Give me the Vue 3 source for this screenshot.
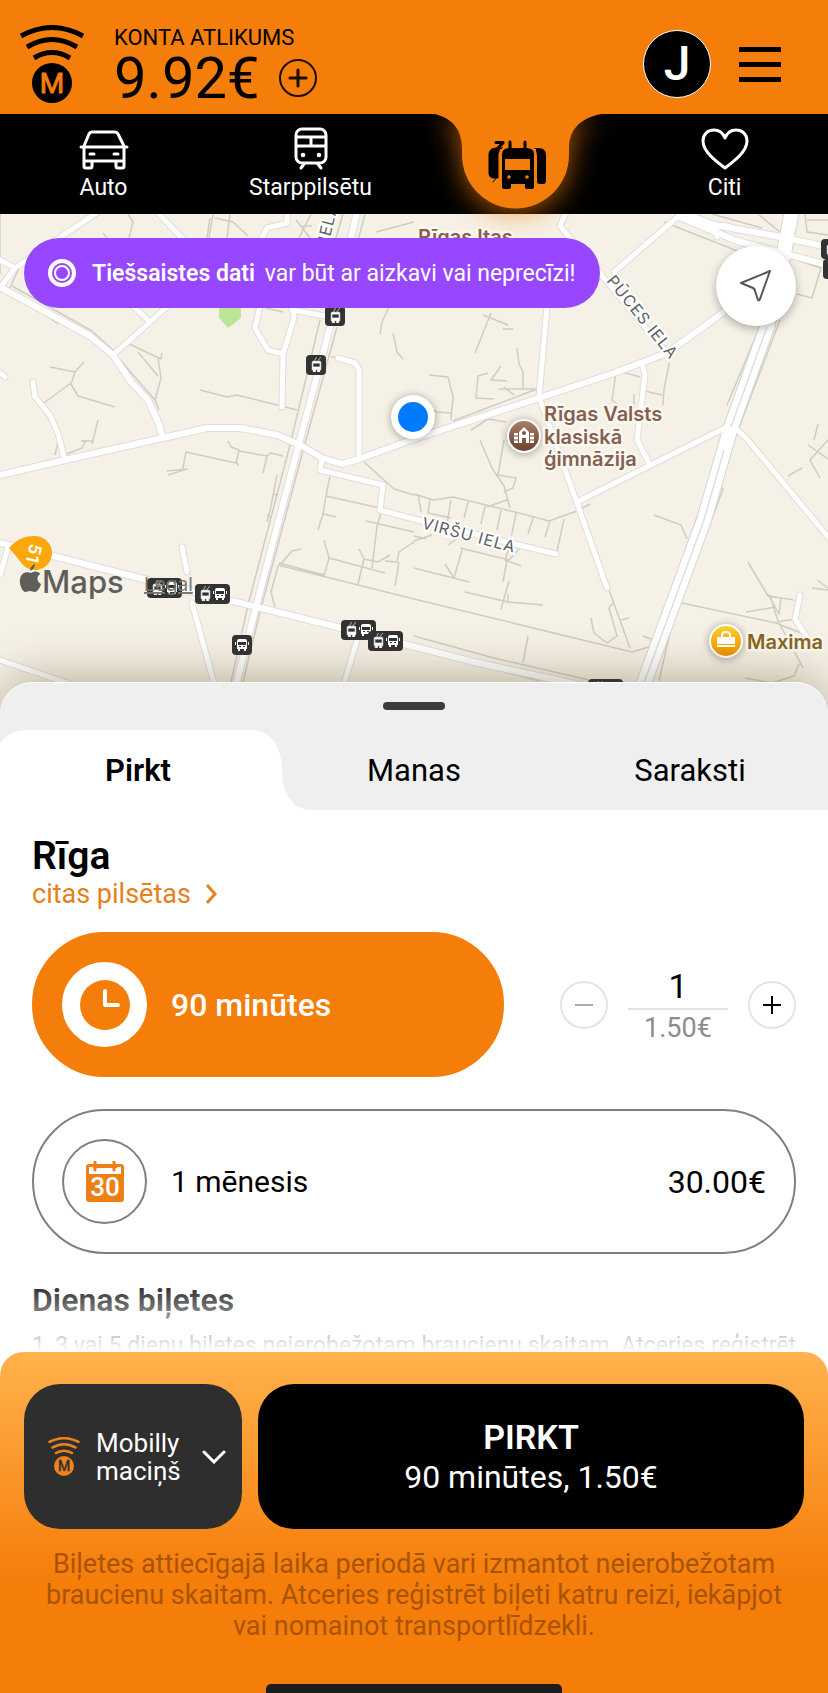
<script setup>
import { computed, ref } from 'vue'

const navItems = [
  { id: 'auto', label: 'Auto' },
  { id: 'train', label: 'Starppilsētu' },
  { id: 'city', label: 'Sabiedriskais transports', active: true },
  { id: 'other', label: 'Citi' },
]

const tabs = ['Pirkt', 'Manas', 'Saraksti']
const activeTab = ref('Pirkt')

const count = ref(1)
const total = computed(() => (count.value * 1.5).toFixed(2) + '€')

// Footpaths and service lanes
const lanes = [
  'M128 214l5 8-4 16M103 233l5 6M213 214l-4 24M210 218l-3 20M215 218l18 4 15 14M230 214l-3 24M296 220l14 18M299 238l12-24M302 226h10M0 214v60M9 290l10-22M376 232l38-10',
  'M0 282l58 42M12 286l80 45 22 20M113 352l42 48 4 10M129 344l32 15 1-6M138 352l20 24M155 400l6-22-3-20M50 367l25 5 9-10M75 372l-4 12 7 12 37 11M44 403l27-20M98 420l-6 24M81 441h13M55 455l4-18M64 455l18-7 4-8',
  'M200 390l27 7 10-2 60 15M331 357h7M389 307l-7 15-2 12M393 333l4 19 6 7M266 308l17 4M343 214l-14 48M365 214l-18 68M320 320l-30 125-42 160-17 77M337 327l-33 120-44 165-17 70',
  'M168 475l19-6-20 2M183 468l3-16 50 11 3-13-8-3-3-6M237 462l1 4M239 451l28 5 4-3 12 3M267 456l-4 17M277 475l-7 36-3 11M273 494l5 1M267 515l4 2',
  'M330 476l-4 20 54 12M326 496l-3 18-5 16M323 514l13 3M366 521l48 11M381 513l-4 13-5 42M324 540l5 18-5 18M279 566l13-15 9-2M279 563l45 12M329 558l56 15M359 549l5 10 14 3 12-7M364 559l-6 25M385 561l12 1 2-10 15-10M399 562l-4 24M278 565l136 34M278 566l-7 26 4 15',
  'M364 462l30 27 20 6M414 494l20 6 19-3 62 15 34 9 28-10 13-7M418 494l3 18M430 499l-2 14 23 5M451 500l-4 24M468 502l-4 16M485 506l-4 18M501 510l-4 20M516 513l-7 35-4 12 16 6M533 518l-5 16M550 521l-5 16M564 519l-7 32M414 536l12 3M414 541l18-6M448 545l11-8M460 548l49 12 13-14M462 550l-8 28-9-14M507 560l-4 22M414 568l55 14M465 592l43 10 35 3M509 581l-8 28M508 594v8',
  'M480 440l12 28 12 18 6 22M504 440l-6 35 18 3-3 10-9 4M487 507l20-7M414 599l218 53 20-6M528 636l-5 27M591 618l3 15 13 10 10-7-8-28 4-5M609 590l21 58M621 620l8-2M643 636l8 3 2 14M414 645l55 18M440 655l100 26M414 636l80 22 95 22',
  'M491 313l-16 40M483 315l25 10M503 329h10M517 348l2 16 4 8v16M488 373l-10 3-2 22 18 1M501 366l-10 14 16 1M499 389l38 0-84 32M504 387l10 8M429 375l19 2 5 20-2 23M411 400l26 12 14 1M471 430l17-11 18 3M616 372l-4 28 8 6M619 371l21 6M671 355l-7 34-1 16M644 391l18 4M634 394v14M566 465l10 43',
  'M664 222l114 45M712 214l50 14M758 214l22 18M805 214l2 18 21 3M807 220h21M796 260l25 8-9 30-15-4M727 405l62-148M780 320l-63 165 6 4-30 80-20 50-14 62M717 460l-75 215M654 515l27 10 6 14M682 603l94 20 30 12M748 562l20 34 26 4M768 594l11 20 2-16M776 607l-30 5M777 622l18-3M779 623l24 45M770 595l8 26M745 678l27 5 22-7 5-12M808 445l20 14M828 440l-18 20 10 18M802 468l-14 8M817 580l11 8M812 588l16 2M818 424l-4 16',
]

// Narrow streets
const streets = [
  'M0 260l15 8 23-16 60-40M15 268L0 288M157 212l28 29M113 355l37-33 20-18M133 306l17 16M0 373l5 4',
  'M33 382l2 15 15 18 8 18 7 28M287 214v9l-20 5-6 12M260 306l-5 22 13 22 15 4M293 306l1 12-11 36-1 53M292 310l33 6',
  'M338 358l17 5 4 7v89M322 460l-2 10 63 15-3 25 34 9 80 20 62 15',
  'M566 212l-6 14 107 127M614 272l67-58M547 306l-8 91 38 106 30 85M642 363l3 12-8 65 12 23M577 502l154-77M734 427l13 12 81 98M717 237c-5-14 8-12 14-10M800 595l-5 24 12 18',
  'M182 547l5 25M192 603l22 80M0 660l70 24M357 640l-13 44M8 547l-8 28',
]

// Collector roads
const roads = [
  'M-2 286l59 32 33 18 23 19 18 27 17 18 10 22 5 16',
  'M0 475l65-15 142-32h33l37 7 23 10 22 13 20 6 17-5 55-20 125-41 75-25 53-20 50-36 25-20',
  'M357 212l-27 115-32 120-41 156-21 82',
  'M0 543l57 14 138 35 62 15 100 25 117 30 110 24',
  'M677 216l60 25 91 24M681 212l33 13 67 12 47 10',
]

const stops = [
  { x: 325, y: 306, kind: 'trolley' },
  { x: 306, y: 355, kind: 'trolley' },
  { x: 147, y: 578, kind: 'both' },
  { x: 195, y: 584, kind: 'both' },
  { x: 232, y: 635, kind: 'bus' },
  { x: 341, y: 620, kind: 'both' },
  { x: 368, y: 631, kind: 'both' },
  { x: 588, y: 679, kind: 'both' },
  { x: 821, y: 239, kind: 'both' },
  { x: 823, y: 259, kind: 'both' },
]
</script>

<template>
  <div class="app">
    <header class="top">
      <svg class="logo" viewBox="0 0 64 78" role="img" aria-label="Mobilly">
        <g fill="none" stroke="#000" stroke-width="5">
          <path d="M1 11Q32 -6 63 11" />
          <path d="M7 22Q32 7 57 22" />
          <path d="M14 33Q32 22 50 33" />
        </g>
        <circle cx="32" cy="58" r="20" />
        <text class="logo-m logo-m-top" x="32" y="68" text-anchor="middle">M</text>
      </svg>
      <div class="balance">
        <span class="balance-label">KONTA ATLIKUMS</span>
        <div class="balance-row">
          <strong class="balance-value">9.92€</strong>
          <button class="plain add" aria-label="Papildināt kontu">
            <svg viewBox="0 0 40 40" width="40" height="40" fill="none" stroke="#1a0d00">
              <circle cx="20" cy="20" r="18" stroke-width="2" />
              <path d="M20 12v16M12 20h16" stroke-width="3" stroke-linecap="round" />
            </svg>
          </button>
        </div>
      </div>
      <button class="plain avatar">J</button>
      <button class="plain burger" aria-label="Izvēlne"><i></i><i></i><i></i></button>
    </header>

    <nav class="nav">
      <button
        v-for="item in navItems"
        :key="item.id"
        class="plain nav-item"
        :class="{ active: item.active }"
        :aria-label="item.label"
      >
        <svg v-if="item.id === 'auto'" viewBox="0 0 50 40" width="50" height="40" fill="none" stroke="#fff" stroke-width="3" stroke-linecap="round" stroke-linejoin="round">
          <path d="M5 16L10 4q1-2 3-2h23q2 0 3 2l6 12M2 17h46M5 18v18q0 2 2 2h4q2 0 2-2v-5M45 18v18q0 2-2 2h-4q-2 0-2-2v-5M5 31h40M11 24h4M35 24h4" />
        </svg>
        <svg v-else-if="item.id === 'train'" viewBox="0 0 34 44" width="34" height="44" fill="none" stroke="#fff" stroke-width="3" stroke-linecap="round">
          <rect x="2" y="3" width="30" height="34" rx="6" />
          <path d="M3 11h28M3 20h28M17 11v9M10 38l-3 4M24 38l3 4" />
          <g fill="#fff" stroke="none"><circle cx="9" cy="29" r="2.3" /><circle cx="25" cy="29" r="2.3" /></g>
        </svg>
        <template v-else-if="item.id === 'city'">
          <svg class="blob" viewBox="0 0 168 96" width="168" height="96" aria-hidden="true">
            <path d="M0 0C20 4 28 18 28 34V41a53 53 0 0 0 107 0V34C135 18 144 4 168 0Z" fill="#f57d0a" />
          </svg>
          <svg class="fleet" viewBox="0 0 60 50" width="60" height="50">
            <path d="M14 14q0-6 8-6h16q8 0 8 6v28h0v5q0 2-2 2h-5q-2 0-2-2v-3H23v3q0 2-2 2h-5q-2 0-2-2z" />
            <path d="M22 10V2M37 10V2M8 2.500h7M15 3L10 8" fill="none" stroke="#000" stroke-width="3" stroke-linecap="round" />
            <path d="M12 8Q1 7 1 14v20q0 3 4 4l5 0V14q0-4 4-6zM9 37l-4 5" stroke="#000" stroke-linecap="round" />
            <path d="M48 8q10-1 10 7v26q0 3-3 3h-4q-2 0-2-3V15q0-4-3-7z" />
            <path d="M13 9v33M47 9v33" stroke="#f57d0a" stroke-width="2" />
            <rect x="17" y="19" width="25" height="11" fill="#f57d0a" />
            <g fill="#f57d0a"><circle cx="21" cy="37" r="1.800" /><circle cx="39" cy="37" r="1.800" /></g>
          </svg>
        </template>
        <svg v-else viewBox="0 0 48 42" width="48" height="42" fill="none" stroke="#fff" stroke-width="3" stroke-linejoin="round">
          <path d="M24 40C16 34 2 24 2 13 2 6 7 2 13 2c5 0 9 3 11 8 2-5 6-8 11-8 6 0 11 4 11 11 0 11-14 21-22 27z" />
        </svg>
        <span v-if="!item.active" class="nav-label">{{ item.label }}</span>
      </button>
    </nav>

    <section class="map" aria-label="Karte">
      <svg class="map-canvas" viewBox="0 214 828 500" preserveAspectRatio="xMidYMin slice">
        <defs>
          <symbol id="bus" viewBox="0 0 14 14">
            <path d="M2 3q0-2 2-2h6q2 0 2 2v8h-1v2H9v-2H5v2H3v-2H2zM0 4h1v3H0zM13 4h1v3h-1z" fill="#fff" />
            <path d="M3 4h8v3H3zM4 8h2v1H4zM8 8h2v1H8z" fill="#333" />
          </symbol>
          <symbol id="trolley" viewBox="0 0 14 14">
            <path d="M3 5q0-1 1-1h6q1 0 1 1v7h-1v2H8v-2H6v2H4v-2H3zM5 4l2-4M8 4l3-4" fill="#fff" stroke="#fff" stroke-width=".6" />
            <path d="M4 6h6v3H4z" fill="#333" />
          </symbol>
          <linearGradient id="schoolFill" x1="0" y1="0" x2="0" y2="1">
            <stop stop-color="#a97f68" /><stop offset="1" stop-color="#6b412f" />
          </linearGradient>
          <linearGradient id="shopFill" x1="0" y1="0" x2="0" y2="1">
            <stop stop-color="#fdd32a" /><stop offset="1" stop-color="#ee8f00" />
          </linearGradient>
        </defs>
        <rect x="0" y="214" width="828" height="500" fill="#f6f1e6" />
        <path d="M219 300h22v18l-13 10-9-10z" fill="#bce596" />
        <g fill="none" stroke-linejoin="round">
          <path v-for="d in lanes" :key="d" :d="d" stroke="#cfccc2" stroke-width="1.500" />
          <g stroke="#dedede" stroke-width="7" stroke-linecap="round"><path v-for="d in streets" :key="d" :d="d" /></g>
          <g stroke="#dedede" stroke-width="8"><path v-for="d in roads" :key="d" :d="d" /></g>
          <path d="M792 210l-8 43-17 74-36 100-27 93-62 168" stroke="#d5d5d5" stroke-width="16" />
          <g stroke="#fff" stroke-width="5" stroke-linecap="round"><path v-for="d in streets" :key="d" :d="d" /></g>
          <g stroke="#fff" stroke-width="6"><path v-for="d in roads" :key="d" :d="d" /></g>
          <path d="M792 210l-8 43-17 74-36 100-27 93-62 168" stroke="#fff" stroke-width="14" />
          <path d="M767 327l-36 100M724 450l-20 70-62 168" stroke="#dedfe2" stroke-width="1.500" />
        </g>

        <g class="street-names">
          <text transform="translate(606 281) rotate(51)">PŪCES IELA</text>
          <text transform="translate(421 528) rotate(15)">VIRŠU IELA</text>
          <text transform="translate(329 242) rotate(-76)">IELA</text>
        </g>

        <g v-for="s in stops" :key="s.x + '-' + s.y" :transform="`translate(${s.x} ${s.y})`">
          <rect :width="s.kind === 'both' ? 35 : 20" height="20" rx="4" fill="#333" />
          <use v-if="s.kind !== 'bus'" href="#trolley" x="3" y="2" width="15" height="15" />
          <use v-if="s.kind !== 'trolley'" href="#bus" :x="s.kind === 'both' ? 18 : 3" y="3" width="14" height="14" />
        </g>

        <text class="place school" x="418" y="244">Rīgas Itas</text>
        <g class="place-pin">
          <circle cx="524" cy="436" r="16" fill="url(#schoolFill)" stroke="#fff" stroke-width="2" />
          <path d="M519 443v-11l5-5 5 5v11h-3v-5h-4v5zM514 433h4v10h-4zM530 433h4v10h-4z" fill="#fff" />
          <path d="M514 436h4M514 440h4M530 436h4M530 440h4" stroke="#7d5240" />
          <circle cx="524" cy="433" r="2" fill="#7d5240" />
        </g>
        <g class="place school">
          <text x="544" y="421">Rīgas Valsts</text>
          <text x="544" y="444">klasiskā</text>
          <text x="544" y="466">ģimnāzija</text>
        </g>
        <g class="place-pin">
          <circle cx="726" cy="641" r="16" fill="url(#shopFill)" stroke="#fff" stroke-width="2" />
          <path d="M717 637h18v7h-18zM717 645h18v2h-18z" fill="#fff" />
          <path d="M722 637v-2q0-3 4-3t4 3v2" fill="none" stroke="#fff" stroke-width="2" />
        </g>
        <text class="place shop" x="747" y="649">Maxima</text>

        <path d="M9 548Q20 535 35 536a17 17 0 1 1-12 29Q17 557 9 548z" fill="#fda70a" />
        <text class="route" transform="translate(30 543) rotate(103)">51</text>

        <g fill="#5f5e5a">
          <path d="M31 573c2-1 4-2 6-1 2 0 3 1 3 2-4 3-3 8 1 10-1 4-4 8-6 8-2 0-3-1-5-1s-3 1-5 1c-3-1-6-8-5-13 1-6 6-8 11-6zM30 571q0-5 5-7 0 5-5 7z" />
          <text class="maps-word" x="42" y="593">Maps</text>
        </g>
        <text class="legal" x="144" y="591">Legal</text>

        <g class="place-pin">
          <circle cx="413" cy="417" r="22" fill="#fff" />
          <circle cx="413" cy="417" r="15" fill="#007bff" />
        </g>
      </svg>

      <div class="map-overlay">
        <p class="notice">
          <svg viewBox="0 0 28 28" width="28" height="28" fill="none" stroke="#fff">
            <circle cx="14" cy="14" r="12" stroke-width="4" /><circle cx="14" cy="14" r="7" stroke-width="2" />
          </svg>
          <span><b>Tiešsaistes dati</b> var būt ar aizkavi vai neprecīzi!</span>
        </p>
        <button class="plain locate" aria-label="Mana atrašanās vieta">
          <svg viewBox="0 0 34 34" width="34" height="34" fill="none" stroke="#555" stroke-width="2" stroke-linejoin="round">
            <path d="M31 2L2 14l12 5q2 1 2 3l3 9q1 1 2-1z" />
          </svg>
        </button>
      </div>
    </section>

    <main class="sheet">
      <div class="handle"></div>
      <div class="tabs" role="tablist">
        <button
          v-for="tab in tabs"
          :key="tab"
          class="plain tab"
          :class="{ current: tab === activeTab }"
          role="tab"
          :aria-selected="tab === activeTab"
          @click="activeTab = tab"
        >
          <svg v-if="tab === activeTab" class="tab-shape" viewBox="0 0 312 80" preserveAspectRatio="none" aria-hidden="true">
            <path d="M0 80V14Q8 0 28 0H250C272 0 282 18 282 40S292 80 312 80Z" fill="#fff" />
          </svg>
          <span>{{ tab }}</span>
        </button>
      </div>

      <div class="content">
        <h1 class="city">Rīga</h1>
        <a class="cities" href="#">
          citas pilsētas
          <svg viewBox="0 0 12 20" width="12" height="20" fill="none" stroke="#e5801b" stroke-width="3"><path d="M2 1l8 9-8 9" /></svg>
        </a>

        <div class="ticket-row">
          <button class="plain ticket selected">
            <span class="ticket-icon">
              <svg viewBox="0 0 52 52" width="52" height="52">
                <circle cx="26" cy="26" r="25" fill="#f57d0a" />
                <path d="M26 12v14h13" fill="none" stroke="#fff" stroke-width="4" stroke-linecap="round" stroke-linejoin="round" />
              </svg>
            </span>
            <span>90 minūtes</span>
          </button>
          <div class="stepper">
            <button class="plain step" aria-label="Mazāk" :disabled="count === 1" @click="count--">
              <svg viewBox="0 0 20 20" width="20" height="20" stroke="#aaa" stroke-width="2"><path d="M1 10h18" /></svg>
            </button>
            <div class="amount">
              <output class="count">{{ count }}</output>
              <span class="price">{{ total }}</span>
            </div>
            <button class="plain step" aria-label="Vairāk" @click="count++">
              <svg viewBox="0 0 20 20" width="20" height="20" stroke="#000" stroke-width="2"><path d="M1 10h18M10 1v18" /></svg>
            </button>
          </div>
        </div>

        <button class="plain ticket month">
          <span class="ticket-icon">
            <svg viewBox="0 0 38 42" width="38" height="42">
              <rect x="0" y="3" width="38" height="38" rx="3" fill="#ee7f14" />
              <path d="M3 6h32v7H3z" fill="#fff" />
              <path d="M9 1v8M28 1v8" stroke="#ee7f14" stroke-width="3" stroke-linecap="round" />
              <path d="M7 6h24" stroke="#ee7f14" stroke-width="2" />
              <text class="cal-day" x="19" y="35" text-anchor="middle">30</text>
            </svg>
          </span>
          <span>1 mēnesis</span>
          <span class="ticket-price">30.00€</span>
        </button>

        <h2 class="section-title">Dienas biļetes</h2>
        <p class="section-text">1, 3 vai 5 dienu biļetes neierobežotam braucienu skaitam. Atceries reģistrēt</p>
      </div>
      <div class="fade"></div>
    </main>

    <footer class="checkout">
      <div class="actions">
        <button class="plain wallet" aria-haspopup="listbox">
          <svg class="wallet-logo" viewBox="0 0 64 78" aria-hidden="true">
            <g fill="none" stroke="#ee8120" stroke-width="5">
              <path d="M1 11Q32 -6 63 11" />
              <path d="M7 22Q32 7 57 22" />
              <path d="M14 33Q32 22 50 33" />
            </g>
            <circle cx="32" cy="58" r="20" fill="#ee8120" />
            <text class="logo-m logo-m-wallet" x="32" y="68" text-anchor="middle">M</text>
          </svg>
          <span class="wallet-name">Mobilly maciņš</span>
          <svg viewBox="0 0 24 14" width="24" height="14" fill="none" stroke="#fff" stroke-width="3" stroke-linecap="round"><path d="M2 2l10 10L22 2" /></svg>
        </button>
        <button class="plain buy">
          <strong>PIRKT</strong>
          <span>90 minūtes, {{ total }}</span>
        </button>
      </div>
      <p class="terms">Biļetes attiecīgajā laika periodā vari izmantot neierobežotam braucienu skaitam. Atceries reģistrēt biļeti katru reizi, iekāpjot vai nomainot transportlīdzekli.</p>
      <div class="home-bar"></div>
    </footer>
  </div>
</template>

<style>
body {
  margin: 0;
  background: #f57d0a;
}
</style>

<style scoped>
* {
  box-sizing: border-box;
}
.app {
  min-height: 100vh;
  display: flex;
  flex-direction: column;
  overflow: hidden;
  color: #000;
  font-family: Roboto, "Noto Sans", sans-serif;
}
svg {
  display: block;
  flex: none;
}
.plain {
  border: 0;
  padding: 0;
  background: none;
  color: inherit;
  font: inherit;
  cursor: pointer;
}

.top {
  display: flex;
  align-items: center;
  height: 114px;
  padding: 14px 47px 0 20px;
  background: #f57d0a;
}
.logo {
  width: 64px;
  height: 78px;
}
.logo-m {
  font-weight: 400;
  font-size: 28px;
}
.logo-m-top {
  fill: #f57d0a;
  stroke: #f57d0a;
}
.logo-m-wallet {
  fill: #2e2e2e;
  stroke: #2e2e2e;
}
.balance {
  flex: 1;
  margin: 4px 0 0 30px;
}
.balance-label {
  display: block;
  font-size: 22px;
  line-height: 24px;
}
.balance-row {
  display: flex;
  align-items: center;
  gap: 18px;
}
.balance-value {
  font-size: 58px;
  line-height: 56px;
  font-weight: 400;
}
.avatar {
  width: 68px;
  height: 68px;
  border: 1px solid #fff;
  border-radius: 50%;
  background: #000;
  color: #fff;
  font-size: 48px;
  font-weight: 500;
  line-height: 64px;
}
.burger {
  display: flex;
  flex-direction: column;
  gap: 10px;
  width: 42px;
  margin-left: 28px;
}
.burger i {
  height: 5px;
  background: #000;
}

.nav {
  position: relative;
  z-index: 2;
  display: grid;
  grid-template-columns: repeat(4, 1fr);
  height: 100px;
  background: #000;
  color: #fff;
  clip-path: inset(0 0 -40px 0);
}
.nav-item {
  position: relative;
  display: flex;
  flex-direction: column;
  align-items: center;
  justify-content: flex-end;
  padding-bottom: 12px;
}
.nav-label {
  margin-top: 4px;
  font-size: 23px;
  line-height: 28px;
}
.blob {
  position: absolute;
  top: 0;
  left: 50%;
  transform: translateX(-50%);
  filter: drop-shadow(0 4px 14px rgba(245, 125, 10, 0.7));
}
.fleet {
  position: relative;
  margin-bottom: 12px;
}

.map {
  position: relative;
  height: 500px;
  overflow: hidden;
  background: #f6f1e6;
}
.map-canvas {
  width: 100%;
  height: 100%;
}
.map-overlay {
  position: absolute;
  inset: 24px 32px auto 24px;
  display: flex;
  justify-content: space-between;
  align-items: flex-start;
}
.notice {
  display: flex;
  align-items: center;
  gap: 16px;
  height: 70px;
  margin: 0;
  padding: 0 25px 0 24px;
  border-radius: 35px;
  background: #9747ff;
  color: #fff;
  font-size: 23px;
}
.notice b {
  margin-right: 4px;
  font-weight: 600;
}
.locate {
  display: grid;
  place-items: center;
  width: 80px;
  height: 80px;
  margin-top: 8px;
  border-radius: 50%;
  background: #fff;
  box-shadow: 0 3px 10px rgba(0, 0, 0, 0.3);
}
.street-names text {
  font: 16px Inter, sans-serif;
  letter-spacing: 1px;
  fill: #5d5e63;
  stroke: #fff;
  stroke-width: 4px;
  paint-order: stroke;
}
.place {
  font: 600 20px Inter, sans-serif;
  letter-spacing: 0;
  stroke: #fbf8f1;
  stroke-width: 5px;
  stroke-linejoin: round;
  paint-order: stroke;
}
.school {
  fill: #85604f;
}
.shop {
  fill: #8a661c;
}
.place-pin {
  filter: drop-shadow(0 1px 4px rgba(0, 0, 0, 0.35));
}
.route {
  font: 600 18px Roboto, sans-serif;
  fill: #fff;
}
.maps-word {
  font: 500 31px Inter, sans-serif;
}
.legal {
  font: 19px Inter, sans-serif;
  fill: #77766f;
  text-decoration: underline;
}

.sheet {
  position: relative;
  z-index: 1;
  flex: 1;
  margin-top: -32px;
  border-radius: 32px 32px 0 0;
  background: #fff;
  box-shadow: 0 -2px 50px rgba(70, 60, 20, 0.4);
}
.sheet::before {
  content: "";
  position: absolute;
  inset: 1px 0 auto;
  height: 127px;
  border-radius: 32px 32px 0 0;
  background: #efefef;
}
.handle {
  position: relative;
  width: 62px;
  height: 8px;
  margin: 0 auto;
  top: 20px;
  border-radius: 4px;
  background: #3c3c3c;
}
.tabs {
  position: relative;
  display: grid;
  grid-template-columns: repeat(3, 1fr);
  height: 80px;
  margin-top: 40px;
}
.tab {
  position: relative;
  font-size: 31px;
}
.tab span {
  position: relative;
}
.tab.current {
  font-weight: 600;
}
.tab-shape {
  position: absolute;
  inset: 0 auto auto 0;
  width: 113%;
  height: 100%;
}
.content {
  padding: 24px 32px 0;
}
.city {
  margin: 0;
  font-size: 39px;
  line-height: 44px;
  font-weight: 600;
}
.cities {
  display: inline-flex;
  align-items: center;
  gap: 14px;
  color: #e5801b;
  font-size: 27px;
  line-height: 32px;
  text-decoration: none;
}
.ticket-row {
  display: flex;
  gap: 56px;
  align-items: center;
  margin-top: 22px;
}
.ticket {
  display: flex;
  align-items: center;
  gap: 24px;
  height: 145px;
  padding: 0 28px;
  border: 2px solid #808080;
  border-radius: 73px;
  font-size: 30px;
  text-align: left;
}
.ticket-icon {
  display: grid;
  place-items: center;
  width: 85px;
  height: 85px;
  border: 2px solid #808080;
  border-radius: 50%;
  background: #fff;
}
.ticket.selected {
  flex: 1;
  border-color: #f57d0a;
  background: #f57d0a;
  color: #fff;
  font-size: 32px;
  font-weight: 500;
}
.selected .ticket-icon {
  border-color: #fff;
}
.month {
  width: 100%;
  margin-top: 32px;
}
.ticket-price {
  margin-left: auto;
  font-size: 32px;
}
.cal-day {
  fill: #fff;
  font-size: 26px;
  font-weight: 500;
}
.stepper {
  display: flex;
  align-items: center;
  gap: 20px;
}
.step {
  display: grid;
  place-items: center;
  width: 48px;
  height: 48px;
  border: 2px solid #e5e3e3;
  border-radius: 50%;
}
.amount {
  display: flex;
  flex-direction: column;
  width: 100px;
  text-align: center;
}
.count {
  border-bottom: 2px solid #e5e3e3;
  font-size: 34px;
  line-height: 44px;
}
.price {
  color: #8c8c8c;
  font-size: 27px;
  line-height: 36px;
}
.section-title {
  margin: 26px 0 0;
  font-size: 32px;
  line-height: 40px;
  font-weight: 600;
}
.section-text {
  margin: 8px 0 0;
  white-space: nowrap;
  font-size: 23px;
  line-height: 36px;
}
.fade {
  position: absolute;
  inset: auto 0 0;
  height: 104px;
  background: linear-gradient(rgba(255, 255, 255, 0), #fff 80px);
}

.checkout {
  position: relative;
  z-index: 2;
  margin-top: -24px;
  padding: 32px 24px 0;
  border-radius: 24px 24px 0 0;
  background: linear-gradient(#ffb24c, #f57d0a 230px);
}
.actions {
  display: flex;
  gap: 16px;
}
.wallet,
.buy {
  display: flex;
  align-items: center;
  height: 145px;
  border-radius: 36px;
  color: #fff;
}
.wallet {
  gap: 16px;
  width: 218px;
  padding: 0 16px 0 24px;
  background: #2e2e2e;
  text-align: left;
}
.wallet-logo {
  width: 32px;
  height: 39px;
}
.wallet-name {
  flex: 1;
  font-size: 26px;
  line-height: 28px;
}
.buy {
  flex: 1;
  flex-direction: column;
  justify-content: center;
  background: #000;
  font-size: 32px;
  line-height: 40px;
}
.buy strong {
  font-size: 34px;
  font-weight: 600;
}
.terms {
  margin: 20px 8px 0;
  color: #a95404;
  font-size: 27px;
  line-height: 31px;
  text-align: center;
}
.home-bar {
  width: 296px;
  height: 9px;
  margin: 42px auto 0;
  border-radius: 5px 5px 0 0;
  background: #1d1d1d;
}
</style>
